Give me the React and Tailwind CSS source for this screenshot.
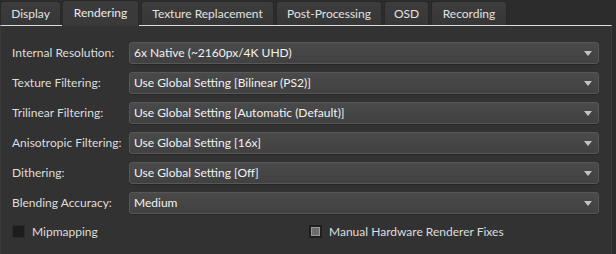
import React from 'react';

const tabs = [
  { label: 'Display', w: 'w-[61px]', ml: 'ml-0' },
  { label: 'Rendering', w: 'w-[77px]', ml: 'ml-px', active: true },
  { label: 'Texture Replacement', w: 'w-[133px]', ml: 'ml-[2px]' },
  { label: 'Post-Processing', w: 'w-[106px]', ml: 'ml-[2px]' },
  { label: 'OSD', w: 'w-[45px]', ml: 'ml-[2px]' },
  { label: 'Recording', w: 'w-[76px]', ml: 'ml-[2px]' },
];

const rows = [
  ['Internal Resolution:', '6x Native (~2160px/4K UHD)'],
  ['Texture Filtering:', 'Use Global Setting [Bilinear (PS2)]'],
  ['Trilinear Filtering:', 'Use Global Setting [Automatic (Default)]'],
  ['Anisotropic Filtering:', 'Use Global Setting [16x]'],
  ['Dithering:', 'Use Global Setting [Off]'],
  ['Blending Accuracy:', 'Medium'],
];

function Combo({ value }) {
  return (
    <div className="flex h-[22px] w-[470px] items-center justify-between rounded-[3px] border border-[#575757] bg-gradient-to-b from-[#4a4a4a] to-[#414141] pl-[4px] pr-[6px] text-[#f2f2f2] shadow-[0_1px_0_#262626]">
      <span>{value}</span>
      <svg width="8" height="5" viewBox="0 0 8 5">
        <path d="M0 0 H8 L4 5 Z" fill="#c4c4c4" />
      </svg>
    </div>
  );
}

export default function App() {
  return (
    <div
      className="h-[254px] w-[616px] overflow-hidden bg-[#2c2c2c] text-[12px] leading-none text-[#dedede]"
      style={{ fontFamily: 'Lato, "Noto Sans", sans-serif' }}
    >
      <div className="flex h-[25px] items-end">
        {tabs.map((t) =>
          t.active ? (
            <div
              key={t.label}
              className={`${t.w} ${t.ml} relative z-10 -mb-px flex h-[26px] items-start justify-center rounded-t-[3px] border border-b-0 border-[#2a2a2a] bg-[#3a3a3a] pt-[6px] text-[#ececec]`}
            >
              {t.label}
            </div>
          ) : (
            <div
              key={t.label}
              className={`${t.w} ${t.ml} flex h-[24px] items-center justify-center rounded-t-[3px] border border-b-0 border-[#282828] bg-gradient-to-b from-[#3d3d3d] to-[#363636] pt-[1px] text-[#e2e2e2]`}
            >
              {t.label}
            </div>
          )
        )}
      </div>
      <div className="h-[240px] w-[612px] border-x border-t border-x-[#3a3a3a] border-t-[#dcdcdc] bg-[#323232] pl-[11px] pt-[16px]">
        <div className="flex flex-col gap-[8px]">
          {rows.map(([label, value]) => (
            <div key={label} className="flex items-center">
              <div className="w-[117px]">{label}</div>
              <Combo value={value} />
            </div>
          ))}
        </div>
        <div className="mt-[11px] grid w-[587px] grid-cols-2 gap-[7px]">
          <div className="flex items-center gap-[7px]">
            <div className="h-[13px] w-[13px] border border-[#2a2a2a] bg-[#1d1d1d]" />
            <span>Mipmapping</span>
          </div>
          <div className="flex items-center gap-[7px]">
            <div className="h-[13px] w-[13px] border border-[#1e1e1e] bg-[#1e1e1e] p-px">
              <div className="h-full w-full border border-[#9a9a9a] bg-[#6c6c6c]" />
            </div>
            <span>Manual Hardware Renderer Fixes</span>
          </div>
        </div>
      </div>
    </div>
  );
}
